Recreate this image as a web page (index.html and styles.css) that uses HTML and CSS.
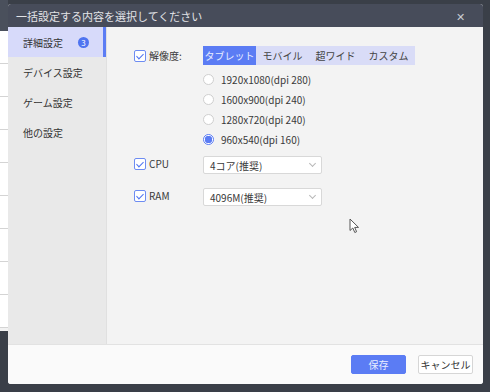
FILE: index.html
```html
<!DOCTYPE html>
<html lang="ja">
<head>
  <meta charset="UTF-8" />
  <title>一括設定</title>
  <link rel="stylesheet" href="styles.css">
</head>
<body>
  <!-- page behind the dialog -->
  <div class="backdrop">
    <div class="backdrop-head"></div>
    <div class="backdrop-list">
      <div class="backdrop-row"></div>
      <div class="backdrop-row"></div>
      <div class="backdrop-row"></div>
      <div class="backdrop-row"></div>
      <div class="backdrop-row"></div>
      <div class="backdrop-row"></div>
      <div class="backdrop-row"></div>
      <div class="backdrop-row"></div>
      <div class="backdrop-row"></div>
    </div>
  </div>

  <div class="dialog">
    <div class="dialog-title">
      <span>一括設定する内容を選択してください</span>
      <span class="close">&#x2715;</span>
    </div>

    <div class="dialog-body">
      <!-- Sidebar -->
      <div class="sidebar">
        <div class="side-item active">詳細設定 <span class="badge">3</span></div>
        <div class="side-item">デバイス設定</div>
        <div class="side-item">ゲーム設定</div>
        <div class="side-item">他の設定</div>
      </div>

      <!-- Settings -->
      <div class="content">
        <div class="setting-row resolution">
          <label class="check-label"><span class="checkbox"></span>解像度:</label>
          <div class="setting-control">
            <div class="tabs">
              <div class="tab active">タブレット</div>
              <div class="tab">モバイル</div>
              <div class="tab">超ワイド</div>
              <div class="tab">カスタム</div>
            </div>
            <div class="radio-list">
              <div class="radio-item"><span class="radio"></span>1920x1080(dpi 280)</div>
              <div class="radio-item"><span class="radio"></span>1600x900(dpi 240)</div>
              <div class="radio-item"><span class="radio"></span>1280x720(dpi 240)</div>
              <div class="radio-item"><span class="radio checked"></span>960x540(dpi 160)</div>
            </div>
          </div>
        </div>

        <div class="setting-row">
          <label class="check-label small"><span class="checkbox"></span>CPU</label>
          <div class="select">4コア(推奨)<span class="chevron"></span></div>
        </div>

        <div class="setting-row">
          <label class="check-label small"><span class="checkbox"></span>RAM</label>
          <div class="select">4096M(推奨)<span class="chevron"></span></div>
        </div>

        <svg class="cursor" width="11" height="16" viewBox="0 0 11 16">
          <path d="M1 1 L1 12.5 L3.8 10 L5.8 14.5 L7.6 13.7 L5.7 9.4 L9.5 9.4 Z" fill="#fff" stroke="#555" stroke-width="1" stroke-linejoin="round"/>
        </svg>
      </div>
    </div>

    <div class="dialog-footer">
      <button class="btn primary">保存</button>
      <button class="btn">キャンセル</button>
    </div>
  </div>
</body>
</html>
```

FILE: styles.css
```css
* {
  margin: 0;
  padding: 0;
  box-sizing: border-box;
}

html, body {
  width: 490px;
  height: 392px;
  overflow: hidden;
}

body {
  background: #3a3f48;
  font-family: "Noto Sans CJK JP", "Noto Sans", "Liberation Sans", sans-serif;
  font-size: 10px;
  color: #3a3a3a;
  display: flex;
  padding: 4px 7px 8px 0;
}

/* page behind the dialog */
.backdrop {
  width: 8px;
  display: flex;
  flex-direction: column;
  overflow: hidden;
  margin-top: -4px;
}

.backdrop-head {
  height: 31px;
  background: #4a505c;
}

.backdrop-list {
  height: 300px;
  overflow: hidden;
  background: #f2f2f2;
}

.backdrop-row {
  height: 33px;
  border-bottom: 1px solid #d4d4d4;
  background: #fff;
}

.dialog {
  flex: 1;
  display: flex;
  flex-direction: column;
  border-radius: 3px;
  overflow: hidden;
  background: #fafafa;
}

.dialog-title {
  height: 23px;
  background: #474c5a;
  color: #e2e3e7;
  font-size: 11px;
  display: flex;
  align-items: center;
  justify-content: space-between;
  padding: 0 18px 0 8px;
}

.close {
  font-size: 11px;
  color: #c9cbd1;
}

.dialog-body {
  flex: 1;
  display: flex;
}

.sidebar {
  width: 99px;
  background: #e9e9e9;
  border-right: 1px solid #e0e0e0;
}

.side-item {
  height: 30px;
  display: flex;
  align-items: center;
  padding-left: 15px;
  font-size: 10px;
  color: #333;
}

.side-item.active {
  background: #d7dafa;
  border-right: 3px solid #5b7cf4;
}

.badge {
  width: 11px;
  height: 11px;
  border-radius: 50%;
  background: #4f74f0;
  color: #fff;
  font-size: 8px;
  line-height: 11px;
  text-align: center;
  margin-left: 15px;
}

.content {
  flex: 1;
  background: #f3f3f3;
  padding: 19px 0 0 27px;
  display: flex;
  flex-direction: column;
  gap: 14px;
  position: relative;
}

.setting-row {
  display: flex;
  align-items: flex-start;
}

.setting-row.resolution {
  margin-bottom: -7px;
}

.check-label {
  width: 69px;
  display: flex;
  align-items: center;
  gap: 3px;
  height: 19px;
}

.check-label.small {
  height: 13px;
  margin-top: 1px;
}

.checkbox {
  width: 12px;
  height: 12px;
  border: 1px solid #6d8cf2;
  border-radius: 2px;
  background: #fff;
  position: relative;
}

.checkbox::after {
  content: "";
  position: absolute;
  left: 3px;
  top: 1px;
  width: 3px;
  height: 6px;
  border: solid #4f74f0;
  border-width: 0 1.5px 1.5px 0;
  transform: rotate(45deg);
}

.tabs {
  display: flex;
  width: 212px;
  height: 19px;
  background: #d9dcf7;
}

.tab {
  flex: 1;
  display: flex;
  align-items: center;
  justify-content: center;
  color: #444;
}

.tab.active {
  background: #5b7cf4;
  color: #e9edff;
}

.radio-list {
  display: flex;
  flex-direction: column;
  padding-top: 4px;
}

.radio-item {
  height: 20px;
  display: flex;
  align-items: center;
  gap: 7px;
}

.radio {
  width: 11px;
  height: 11px;
  border: 1px solid #cfcfcf;
  border-radius: 50%;
  background: #fff;
}

.radio.checked {
  border-color: #5b7cf4;
  background: radial-gradient(circle, #5b7cf4 0 3.5px, #fff 4px);
}

.select {
  width: 119px;
  height: 18px;
  border: 1px solid #d8d8d8;
  border-radius: 2px;
  background: #fff;
  display: flex;
  align-items: center;
  justify-content: space-between;
  padding: 0 6px;
}

.chevron {
  width: 5px;
  height: 5px;
  border: solid #b8b8b8;
  border-width: 0 1px 1px 0;
  transform: rotate(45deg);
  margin-top: -3px;
}

.cursor {
  position: absolute;
  left: 242px;
  top: 191px;
}

.dialog-footer {
  height: 40px;
  border-top: 1px solid #e2e2e2;
  background: #fafafa;
  display: flex;
  align-items: center;
  justify-content: flex-end;
  gap: 12px;
  padding-right: 10px;
}

.btn {
  width: 55px;
  height: 19px;
  border: 1px solid #d6d6d6;
  border-radius: 2px;
  background: #fff;
  color: #333;
  font-family: inherit;
  font-size: 10px;
}

.btn.primary {
  background: #5b7cf4;
  border-color: #5b7cf4;
  color: #e9edff;
}
```
